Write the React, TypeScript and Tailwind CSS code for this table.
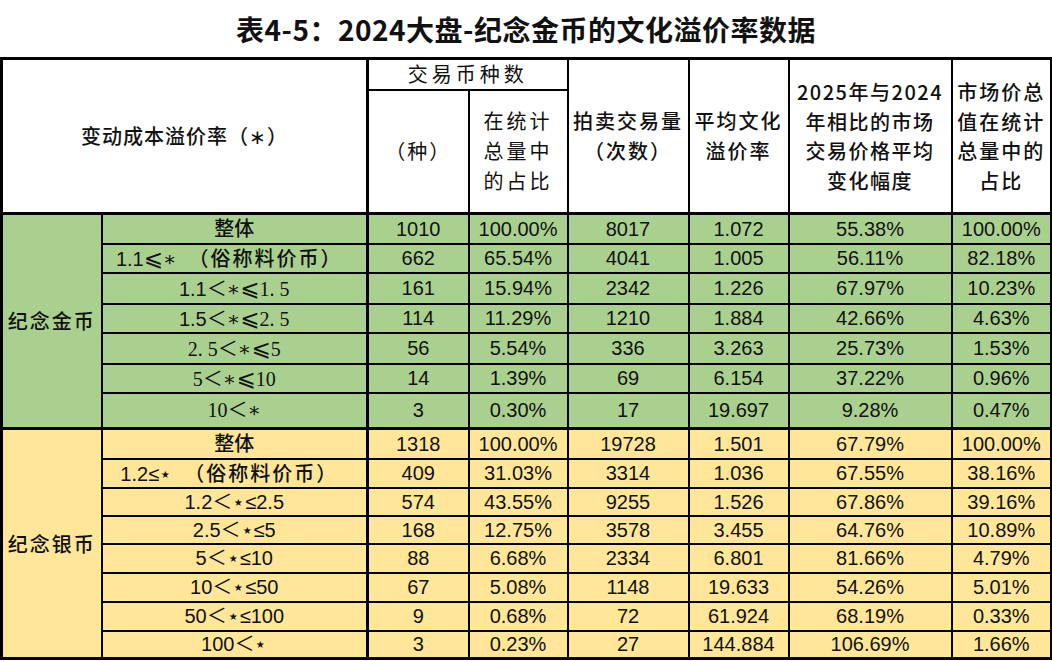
import React from 'react';

type Row = {
  label: React.ReactNode;
  cells: string[];
  h: string;
};

const sans = "font-['Liberation_Sans','Noto_Sans_CJK_SC',sans-serif]";
const cjk = "font-['Noto_Sans_CJK_SC',sans-serif]";
const serif = "font-['Liberation_Serif','DejaVu_Serif','Noto_Sans_CJK_SC',serif]";

const Sv: React.FC<{ children: React.ReactNode }> = ({ children }) => (
  <span className={serif}>{children}</span>
);

// slanted less-or-equal, as the source sheet renders it
const Le = () => <span className="font-['DejaVu_Sans',serif] text-[23px] leading-none">⩽</span>;

const goldRows: Row[] = [
  { label: <span className={`${cjk} font-medium`}>整体</span>, cells: ['1010', '100.00%', '8017', '1.072', '55.38%', '100.00%'], h: 'h-[30px]' },
  {
    label: (
      <span className="pr-[10px]">
        1.1<Le />
        <Sv>∗</Sv>
        <span className={`${cjk} font-medium tracking-[2px]`}>　（俗称料价币）</span>
      </span>
    ),
    cells: ['662', '65.54%', '4041', '1.005', '56.11%', '82.18%'],
    h: 'h-[29px]',
  },
  { label: <span>1.1<Sv>＜∗</Sv><Le /><Sv>1. 5</Sv></span>, cells: ['161', '15.94%', '2342', '1.226', '67.97%', '10.23%'], h: 'h-[31px]' },
  { label: <span>1.5<Sv>＜∗</Sv><Le /><Sv>2. 5</Sv></span>, cells: ['114', '11.29%', '1210', '1.884', '42.66%', '4.63%'], h: 'h-[29px]' },
  { label: <span><Sv>2. 5＜∗</Sv><Le /><Sv>5</Sv></span>, cells: ['56', '5.54%', '336', '3.263', '25.73%', '1.53%'], h: 'h-[31px]' },
  { label: <span><Sv>5＜∗</Sv><Le /><Sv>10</Sv></span>, cells: ['14', '1.39%', '69', '6.154', '37.22%', '0.96%'], h: 'h-[29px]' },
  { label: <Sv>10＜∗</Sv>, cells: ['3', '0.30%', '17', '19.697', '9.28%', '0.47%'], h: 'h-[36px]' },
];

const silverRows: Row[] = [
  { label: <span className={`${cjk} font-medium`}>整体</span>, cells: ['1318', '100.00%', '19728', '1.501', '67.79%', '100.00%'], h: 'h-[30px]' },
  {
    label: (
      <span className="pr-[10px]">
        1.2≤⋆<span className={`${cjk} font-medium tracking-[2px]`}>　（俗称料价币）</span>
      </span>
    ),
    cells: ['409', '31.03%', '3314', '1.036', '67.55%', '38.16%'],
    h: 'h-[29px]',
  },
  { label: '1.2＜⋆≤2.5', cells: ['574', '43.55%', '9255', '1.526', '67.86%', '39.16%'], h: 'h-[28px]' },
  { label: '2.5＜⋆≤5', cells: ['168', '12.75%', '3578', '3.455', '64.76%', '10.89%'], h: 'h-[28px]' },
  { label: '5＜⋆≤10', cells: ['88', '6.68%', '2334', '6.801', '81.66%', '4.79%'], h: 'h-[29px]' },
  { label: '10＜⋆≤50', cells: ['67', '5.08%', '1148', '19.633', '54.26%', '5.01%'], h: 'h-[29px]' },
  { label: '50＜⋆≤100', cells: ['9', '0.68%', '72', '61.924', '68.19%', '0.33%'], h: 'h-[29px]' },
  { label: '100＜⋆', cells: ['3', '0.23%', '27', '144.884', '106.69%', '1.66%'], h: 'h-[28px]' },
];

const td = 'border-2 border-black text-center p-0';

const Section: React.FC<{ name: string; rows: Row[]; bg: string }> = ({ name, rows, bg }) => (
  <>
    {rows.map((r, i) => (
      <tr key={i} className={`${bg} ${r.h}`}>
        {i === 0 && (
          <td
            rowSpan={rows.length}
            className={`${td} border-t-[3px] ${cjk} font-medium text-[20px] tracking-[2px] text-[#111]`}
          >
            {name}
          </td>
        )}
        <td className={`${td} ${i === 0 ? 'border-t-[3px]' : ''} ${sans} text-[20px] text-[#111] leading-none whitespace-nowrap`}>
          {r.label}
        </td>
        {r.cells.map((c, j) => (
          <td
            key={j}
            className={`${td} ${i === 0 ? 'border-t-[3px]' : ''} ${j === 0 ? 'border-l-[3px]' : ''} ${sans} text-[20px] text-[#111] leading-none`}
          >
            {c}
          </td>
        ))}
      </tr>
    ))}
  </>
);

export default function App() {
  const head = `${td} ${cjk} font-medium text-[20px] text-[#111] bg-white`;
  return (
    <div className="w-[1052px] h-[661px] bg-white overflow-hidden">
      <div className={`h-[57px] flex items-center justify-center ${cjk} font-bold text-[28px] text-[#111] tracking-[0.5px]`}>
        表4-5：2024大盘-纪念金币的文化溢价率数据
      </div>
      <table className="table-fixed border-collapse w-[1050px] border-[3px] border-black">
        <colgroup>
          <col className="w-[100px]" />
          <col className="w-[266px]" />
          <col className="w-[101px]" />
          <col className="w-[99px]" />
          <col className="w-[121px]" />
          <col className="w-[100px]" />
          <col className="w-[163px]" />
          <col className="w-[100px]" />
        </colgroup>
        <tbody>
          <tr className="h-[31px]">
            <td colSpan={2} rowSpan={2} className={`${head} tracking-[1px]`}>
              变动成本溢价率（∗）
            </td>
            <td colSpan={2} className={`${head} border-l-[3px] font-normal tracking-[4px] leading-none`}>
              交易币种数
            </td>
            <td rowSpan={2} className={`${head} tracking-[2px] leading-[30px]`}>
              拍卖交易量
              <br />
              （次数）
            </td>
            <td rowSpan={2} className={`${head} tracking-[2px] leading-[30px]`}>
              平均文化
              <br />
              溢价率
            </td>
            <td rowSpan={2} className={`${head} tracking-[1.5px] leading-[29.5px]`}>
              2025年与2024
              <br />
              年相比的市场
              <br />
              交易价格平均
              <br />
              变化幅度
            </td>
            <td rowSpan={2} className={`${head} tracking-[2px] leading-[29.5px]`}>
              市场价总
              <br />
              值在统计
              <br />
              总量中的
              <br />
              占比
            </td>
          </tr>
          <tr className="h-[124px]">
            <td className={`${head} border-l-[3px] font-normal tracking-[2px]`}>（种）</td>
            <td className={`${head} font-normal tracking-[3px] leading-[30px]`}>
              在统计
              <br />
              总量中
              <br />
              的占比
            </td>
          </tr>
          <Section name="纪念金币" rows={goldRows} bg="bg-[#a9d08e]" />
          <Section name="纪念银币" rows={silverRows} bg="bg-[#ffe699]" />
        </tbody>
      </table>
    </div>
  );
}
